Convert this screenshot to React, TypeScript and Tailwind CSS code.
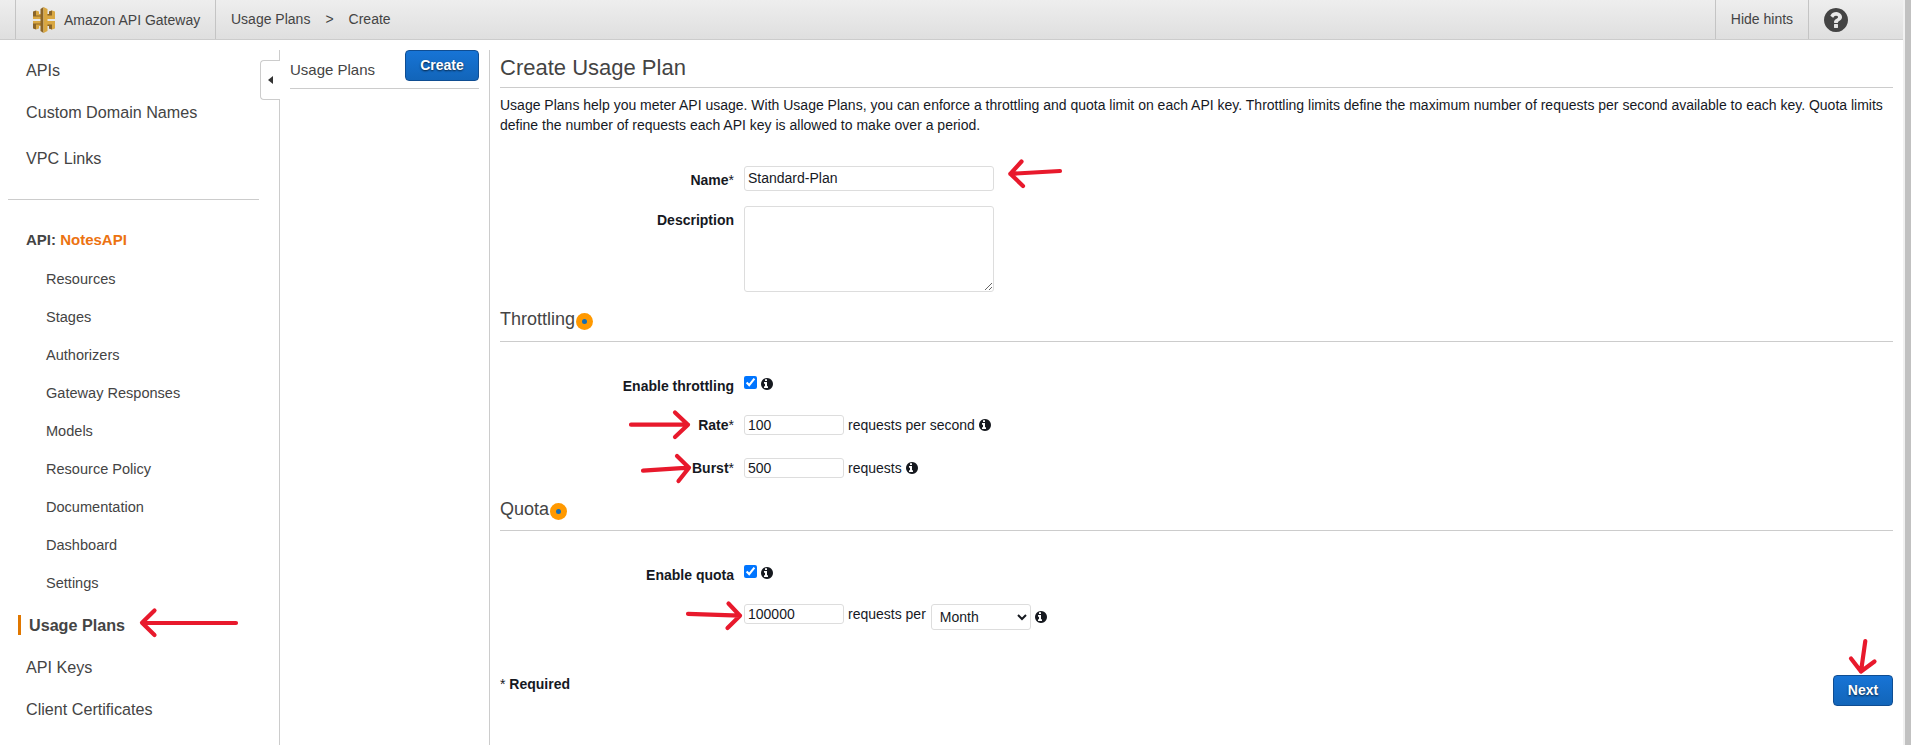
import React from "react";

const apiLinks = [
  "Resources",
  "Stages",
  "Authorizers",
  "Gateway Responses",
  "Models",
  "Resource Policy",
  "Documentation",
  "Dashboard",
  "Settings",
];

function GatewayLogo() {
  return (
    <svg width="22" height="26" viewBox="0 0 22 26" className="shrink-0">
      <path d="M0 4.500L3 3.500V7H8V12H0z" fill="#8a6428" />
      <path d="M0 21.500L3 22.500V19H8V14H0z" fill="#8a6428" />
      <path d="M3 3.500L6 4.500V7H8V8.500H3zM0 9.500H8V12H0z" fill="#d9a741" />
      <path d="M3 22.500L6 21.500V19H8V17.500H3zM0 16.500H8V14H0z" fill="#d9a741" />
      <path d="M16 4.500L19 3.500L22 4.500V12H14V7H16z" fill="#d9a741" />
      <path d="M16 21.500L19 22.500L22 21.500V14H14V19H16z" fill="#d9a741" />
      <path d="M16 4.500L19 3.500V8.500H14V7H16zM16 21.500L19 22.500V17.500H14V19H16z" fill="#8a6428" />
      <path d="M7.500 2L10.500 0V26L7.500 24z" fill="#8a6428" />
      <path d="M10.500 0L14.500 2V24L10.500 26z" fill="#d9a741" />
    </svg>
  );
}

function Info({ className = "" }: { className?: string }) {
  return (
    <svg viewBox="128 128 1536 1536" fill="currentColor" className={`h-3 w-3 shrink-0 text-[#16191f] ${className}`}>
      <path d="M1024 1376v-160q0-14-9-23t-23-9h-96v-512q0-14-9-23t-23-9h-320q-14 0-23 9t-9 23v160q0 14 9 23t23 9h96v320h-96q-14 0-23 9t-9 23v160q0 14 9 23t23 9h448q14 0 23-9t9-23zm-128-896v-160q0-14-9-23t-23-9h-192q-14 0-23 9t-9 23v160q0 14 9 23t23 9h192q14 0 23-9t9-23zm768 416q0 209-103 385.500t-279.500 279.500-385.500 103-385.500-103-279.500-279.500-103-385.500 103-385.500 279.500-279.500 385.500-103 385.500 103 279.500 279.500 103 385.500z" />
    </svg>
  );
}

function Help() {
  return (
    <svg viewBox="128 128 1536 1536" fill="currentColor" className="h-6 w-6">
      <path d="M1024 1376v-192q0-14-9-23t-23-9h-192q-14 0-23 9t-9 23v192q0 14 9 23t23 9h192q14 0 23-9t9-23zm256-672q0-88-55.500-163t-138.500-116-170-41q-243 0-371 213-15 24 8 42l132 100q7 6 19 6 16 0 25-12 53-68 86-92 34-24 86-24 48 0 85.500 26t37.500 59q0 38-20 61t-68 45q-63 28-115.500 86.500t-52.500 125.500v36q0 14 9 23t23 9h192q14 0 23-9t9-23q0-19 21.500-49.500t54.500-49.500q32-18 49-28.500t46-35 44.500-48 28-60.500 12.500-81zm384 192q0 209-103 385.500t-279.500 279.500-385.500 103-385.500-103-279.500-279.500-103-385.500 103-385.500 279.500-279.500 385.500-103 385.500 103 279.500 279.500 103 385.500z" />
    </svg>
  );
}

function Hint() {
  return (
    <span className="mt-px flex h-[17px] w-[17px] items-center justify-center rounded-full bg-[#ff9900]">
      <span className="h-[5px] w-[5px] rounded-full bg-[#146eb4]" />
    </span>
  );
}

function Label({ text, required = false, className = "" }: { text: string; required?: boolean; className?: string }) {
  return (
    <label className={`w-[234px] shrink-0 text-right leading-5 font-bold ${className}`}>
      {text}
      {required && <span className="font-normal">*</span>}
    </label>
  );
}

function SmallInput({ value }: { value: string }) {
  return (
    <input
      defaultValue={value}
      className="h-5 w-[100px] shrink-0 rounded-[3px] border border-[#dddddd] bg-white px-[3px] text-[14px] leading-[18px] outline-none"
    />
  );
}

function SectionTitle({ text, className }: { text: string; className: string }) {
  return (
    <div className={`flex items-center border-b border-[#cccccc] ${className}`}>
      <h2 className="-mt-1 mr-[1px] text-[18px] leading-6 text-[#444444]">{text}</h2>
      <Hint />
    </div>
  );
}

function Arrow({ d }: { d: string }) {
  return <path d={d} fill="none" stroke="#e8192c" strokeWidth="4.200" strokeLinecap="round" strokeLinejoin="round" />;
}

const blueButton =
  "flex h-[31px] items-center justify-center rounded-[4px] border border-[#0f4d92] bg-linear-to-b from-[#1774d6] to-[#1265b9] pb-px text-[14px] font-bold text-white [text-shadow:0_1px_2px_rgba(0,0,0,0.7)]";

export default function App() {
  return (
    <div className="relative flex h-[745px] w-[1911px] overflow-hidden bg-white font-['Liberation_Sans',Arial,sans-serif] text-[14px] text-[#16191f]">
      <div className="flex min-w-0 flex-1 flex-col">
        <header className="flex h-10 shrink-0 border-b border-[#cccccc] bg-linear-to-b from-[#eeeeee] to-[#dfdfdf] leading-[38px] text-[#444444]">
          <div className="ml-[15px] flex w-[201px] items-center border-x border-[#c4c4c4] pl-[17px]">
            <GatewayLogo />
            <span className="ml-[9px]">Amazon API Gateway</span>
          </div>
          <nav className="flex pl-[15px]">
            <span>Usage Plans</span>
            <span className="ml-[15px]">&gt;</span>
            <span className="ml-[15px]">Create</span>
          </nav>
          <div className="ml-auto w-[94px] border-x border-[#c4c4c4] text-center">Hide hints</div>
          <div className="flex w-[94px] items-center pl-[15px]">
            <Help />
          </div>
        </header>

        <div className="flex min-h-0 flex-1 pt-2.5">
          <aside className="relative w-[280px] shrink-0 border-r border-[#cccccc] text-[#444444]">
            <div className="flex flex-col pl-[26px] text-[16.15px] leading-5">
              <span className="mt-[10px]">APIs</span>
              <span className="mt-[22px]">Custom Domain Names</span>
              <span className="mt-[26px]">VPC Links</span>
            </div>
            <div className="mt-[31px] mr-[20px] ml-2 h-px bg-[#cccccc]" />
            <div className="mt-[30px] pl-[26px] text-[15px] leading-5 font-bold">
              API: <span className="text-[#ec7211]">NotesAPI</span>
            </div>
            <div className="mt-[10px] flex flex-col pl-[46px] text-[14.55px] leading-[38px]">
              {apiLinks.map((name) => (
                <span key={name}>{name}</span>
              ))}
            </div>
            <div className="mt-[13px] ml-[18px] border-l-[3px] border-[#e07700] pl-2 text-[16.15px] leading-5 font-bold">
              Usage Plans
            </div>
            <div className="mt-[22px] flex flex-col gap-[22px] pl-[26px] text-[16.15px] leading-5">
              <span>API Keys</span>
              <span>Client Certificates</span>
            </div>
            <div className="absolute top-[10px] -right-px flex h-10 w-5 items-center rounded-l-[4px] border border-r-0 border-[#cccccc] bg-white pl-[7px]">
              <svg width="5" height="8" viewBox="0 0 5 8">
                <path d="M5 0V8L0 4z" fill="#333333" />
              </svg>
            </div>
          </aside>

          <section className="w-[210px] shrink-0 border-r border-[#cccccc] pr-[10px] pl-[10px]">
            <div className="flex h-[39px] justify-between border-b border-[#cccccc]">
              <span className="mt-[10px] text-[15px] leading-5 text-[#444444]">Usage Plans</span>
              <button className={`${blueButton} w-[74px]`}>Create</button>
            </div>
          </section>

          <main className="flex min-w-0 flex-1 flex-col pr-[10px] pl-[10px]">
            <h1 className="h-[38px] border-b border-[#cccccc] pt-[3px] text-[22px] leading-[30px] text-[#444444]">
              Create Usage Plan
            </h1>
            <p className="mt-[7px] leading-5">
              Usage Plans help you meter API usage. With Usage Plans, you can enforce a throttling and quota limit on
              each API key. Throttling limits define the maximum number of requests per second available to each key.
              Quota limits define the number of requests each API key is allowed to make over a period.
            </p>

            <div className="mt-[31px] flex items-start">
              <Label text="Name" required className="mt-[4px]" />
              <input
                defaultValue="Standard-Plan"
                className="ml-[10px] h-[25px] w-[250px] rounded-[3px] border border-[#dddddd] px-[3px] pb-[2px] text-[14px] outline-none"
              />
            </div>
            <div className="mt-[15px] flex h-[86px] items-start">
              <Label text="Description" className="mt-[4px]" />
              <textarea className="ml-[10px] block h-[86px] w-[250px] rounded-[3px] border border-[#dddddd] outline-none" />
            </div>

            <SectionTitle text="Throttling" className="mt-[19px] pb-[10px]" />

            <div className="mt-[34px] flex h-5 items-start">
              <Label text="Enable throttling" />
              <input type="checkbox" defaultChecked className="ml-[10px] h-[13px] w-[13px]" />
              <Info className="mt-[2px] ml-[4px]" />
            </div>
            <div className="mt-[19px] flex h-5 items-center">
              <Label text="Rate" required className="mr-[10px]" />
              <SmallInput value="100" />
              <span className="mx-[4px] leading-5">requests per second</span>
              <Info />
            </div>
            <div className="mt-[23px] flex h-5 items-center">
              <Label text="Burst" required className="mr-[10px]" />
              <SmallInput value="500" />
              <span className="mx-[4px] leading-5">requests</span>
              <Info />
            </div>

            <SectionTitle text="Quota" className="mt-[23px] pb-[9px]" />

            <div className="mt-[34px] flex h-5 items-start">
              <Label text="Enable quota" />
              <input type="checkbox" defaultChecked className="ml-[10px] h-[13px] w-[13px]" />
              <Info className="mt-[2px] ml-[4px]" />
            </div>
            <div className="mt-[19px] ml-[244px] flex h-[26px] items-start">
              <SmallInput value="100000" />
              <span className="mr-[5px] ml-[4px] leading-5">requests per</span>
              <select className="h-[26px] w-[100px] rounded-[3px] border border-[#dddddd] bg-white pl-1 text-[14px] outline-none">
                <option>Month</option>
              </select>
              <Info className="mt-[7px] ml-[4px]" />
            </div>

            <div className="mt-[45px] flex items-start justify-between">
              <span className="-mt-px leading-5">
                * <b>Required</b>
              </span>
              <button className={`${blueButton} w-[60px]`}>Next</button>
            </div>
          </main>
        </div>
      </div>

      <div className="w-2 shrink-0 border-l-2 border-[#f1f1f1] bg-[#c1c1c1]" />

      <svg className="pointer-events-none absolute inset-0" width="1911" height="745" viewBox="0 0 1911 745">
        <Arrow d="M1060 171L1010.300 173.800M1021.500 161.500L1010.300 173.800L1023 186" />
        <Arrow d="M631 424.700H688M675 412.500L688 424.700L675 437" />
        <Arrow d="M643 470.700L689 467.700M677 456L689 467.700L678.500 481" />
        <Arrow d="M688 613.800L740 615.700M728.500 603.500L740 615.700L727.500 628" />
        <Arrow d="M236 623L142 622.800M154.500 610.500L142 622.800L154.500 635" />
        <Arrow d="M1865.300 641L1861 671.500M1851 658.500L1861 671.500L1874.500 661.500" />
      </svg>
    </div>
  );
}
